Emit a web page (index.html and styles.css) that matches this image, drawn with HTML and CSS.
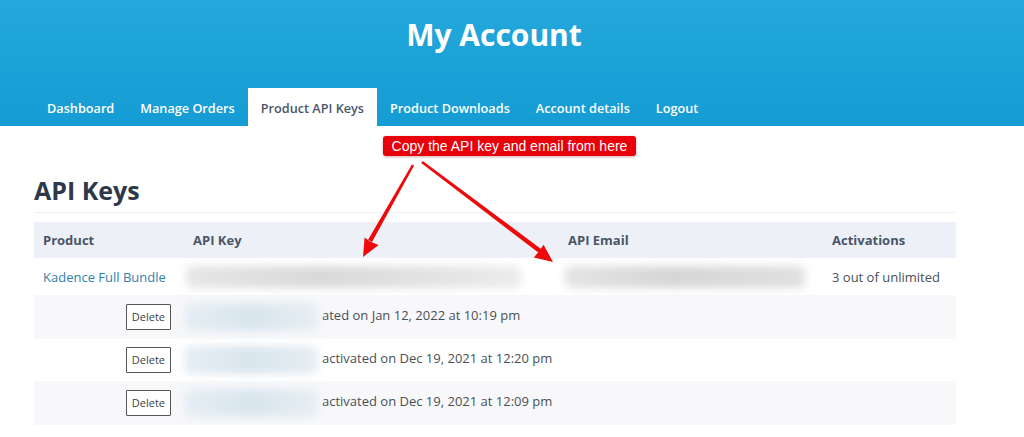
FILE: index.html
```html
<!DOCTYPE html>
<html lang="en">
<head>
  <meta charset="UTF-8">
  <title>My Account</title>
  <link rel="stylesheet" href="styles.css">
</head>
<body>

  <header class="site-header">
    <h1>My Account</h1>
    <nav class="tabs">
      <a href="#">Dashboard</a>
      <a href="#">Manage Orders</a>
      <a href="#" class="active">Product API Keys</a>
      <a href="#">Product Downloads</a>
      <a href="#">Account details</a>
      <a href="#">Logout</a>
    </nav>
  </header>

  <main class="content">
    <h2>API Keys</h2>

    <table class="keys">
      <colgroup>
        <col class="c-product">
        <col class="c-key">
        <col class="c-email">
        <col class="c-act">
      </colgroup>
      <thead>
        <tr>
          <th>Product</th>
          <th>API Key</th>
          <th>API Email</th>
          <th>Activations</th>
        </tr>
      </thead>
      <tbody>
        <tr class="main-row">
          <td><a href="#">Kadence Full Bundle</a></td>
          <td><div class="blur blur-key"></div></td>
          <td><div class="blur blur-email"></div></td>
          <td>3 out of unlimited</td>
        </tr>
        <tr class="sub-row shaded">
          <td class="del-cell"><button>Delete</button></td>
          <td colspan="3"><span class="blur blur-site"></span>ated on Jan 12, 2022 at 10:19 pm</td>
        </tr>
        <tr class="sub-row">
          <td class="del-cell"><button>Delete</button></td>
          <td colspan="3"><span class="blur blur-site"></span>activated on Dec 19, 2021 at 12:20 pm</td>
        </tr>
        <tr class="sub-row shaded">
          <td class="del-cell"><button>Delete</button></td>
          <td colspan="3"><span class="blur blur-site"></span>activated on Dec 19, 2021 at 12:09 pm</td>
        </tr>
      </tbody>
    </table>
  </main>

  <!-- annotation overlay -->
  <div class="callout">Copy the API key and email from here</div>
  <svg class="arrows" width="1024" height="437" viewBox="0 0 1024 437">
    <g fill="#ee0a0a">
      <polygon points="414.1,165.6 411.9,164.4 368,239.9 372,242.1"/>
      <polygon points="363,257 364.6,237.4 370,241.5 378.6,245"/>
      <polygon points="421.2,163 422.8,161 541.4,249.2 538.6,252.8"/>
      <polygon points="553,262 533.8,257.5 539,251.5 543.6,244.7"/>
    </g>
  </svg>

</body>
</html>
```

FILE: styles.css
```css
body {
  margin: 0;
  font-family: "Open Sans", "DejaVu Sans", sans-serif;
  color: #4a4f57;
  background: #fff;
}

.site-header {
  height: 126px;
  background: linear-gradient(#24a8dc, #159cd4);
  display: flex;
  flex-direction: column;
  justify-content: space-between;
}
.site-header h1 {
  margin: 17px 0 0;
  padding-right: 36px;
  text-align: center;
  color: #fff;
  font-size: 30px;
  font-weight: 700;
  line-height: 36px;
}

.tabs {
  display: flex;
  padding-left: 34px;
}
.tabs a {
  display: block;
  height: 36px;
  line-height: 36px;
  padding: 2px 13px 0;
  color: #fff;
  font-size: 12.7px;
  font-weight: 600;
  text-decoration: none;
}
.tabs a.active {
  background: #fff;
  color: #4a5568;
}

.content {
  width: 922px;
  padding: 48px 0 0 34px;
}
.content h2 {
  margin: 0;
  padding-bottom: 6px;
  border-bottom: 1px solid #eef0f3;
  font-size: 25px;
  font-weight: 700;
  line-height: 32px;
  color: #2d3948;
}

.keys {
  width: 922px;
  margin-top: 9px;
  border-collapse: collapse;
  font-size: 13px;
}
.c-product { width: 150px; }
.c-key { width: 375px; }
.c-email { width: 264px; }
.c-act { width: 133px; }

.keys th {
  background: #edf1f7;
  height: 36px;
  padding: 0 9px;
  text-align: left;
  font-weight: 700;
  color: #4a5568;
}
.keys td {
  padding: 0 9px;
  height: 37px;
  vertical-align: middle;
}
.keys a {
  color: #2f82ad;
  text-decoration: none;
}

.main-row td:nth-child(2),
.main-row td:nth-child(3) {
  padding-left: 2px;
}

.sub-row td {
  height: 42px;
  padding: 0;
}
.sub-row.shaded td {
  height: 44px;
  background: #f8f8fa;
}
.del-cell {
  text-align: right;
}
.del-cell button {
  font-family: "Open Sans", "DejaVu Sans", sans-serif;
  font-size: 11px;
  color: #3a3f47;
  background: #fff;
  border: 1px solid #555;
  border-radius: 1px;
  padding: 4px 5px;
  margin-right: 13px;
  line-height: 16px;
}

.blur {
  display: block;
  height: 22px;
  border-radius: 6px;
  filter: blur(4px);
}
.blur-key {
  width: 335px;
  background: linear-gradient(90deg, #e6e6e6, #d9d9d9 40%, #e2e2e2 70%, #ececec);
}
.blur-email {
  width: 240px;
  margin-left: 4px;
  background: linear-gradient(90deg, #e4e4e4, #d6d6d6 45%, #e0e0e0);
}
.blur-site {
  display: inline-block;
  vertical-align: middle;
  width: 134px;
  height: 28px;
  margin: 0 4px 0 0;
  background: linear-gradient(90deg, #e6eef3, #d9e5ed 50%, #e6eef2);
}
.sub-row td:nth-child(2) {
  padding-left: 0;
}

.callout {
  position: absolute;
  left: 383px;
  top: 136px;
  width: 253px;
  height: 20px;
  line-height: 20px;
  text-align: center;
  background: #e8000b;
  color: #fff;
  font-family: "Liberation Sans", Arial, sans-serif;
  font-size: 14px;
  border-radius: 3px;
  box-shadow: 0 1px 3px rgba(120, 0, 0, 0.35);
}
.arrows {
  position: absolute;
  left: 0;
  top: 0;
  pointer-events: none;
}
```
